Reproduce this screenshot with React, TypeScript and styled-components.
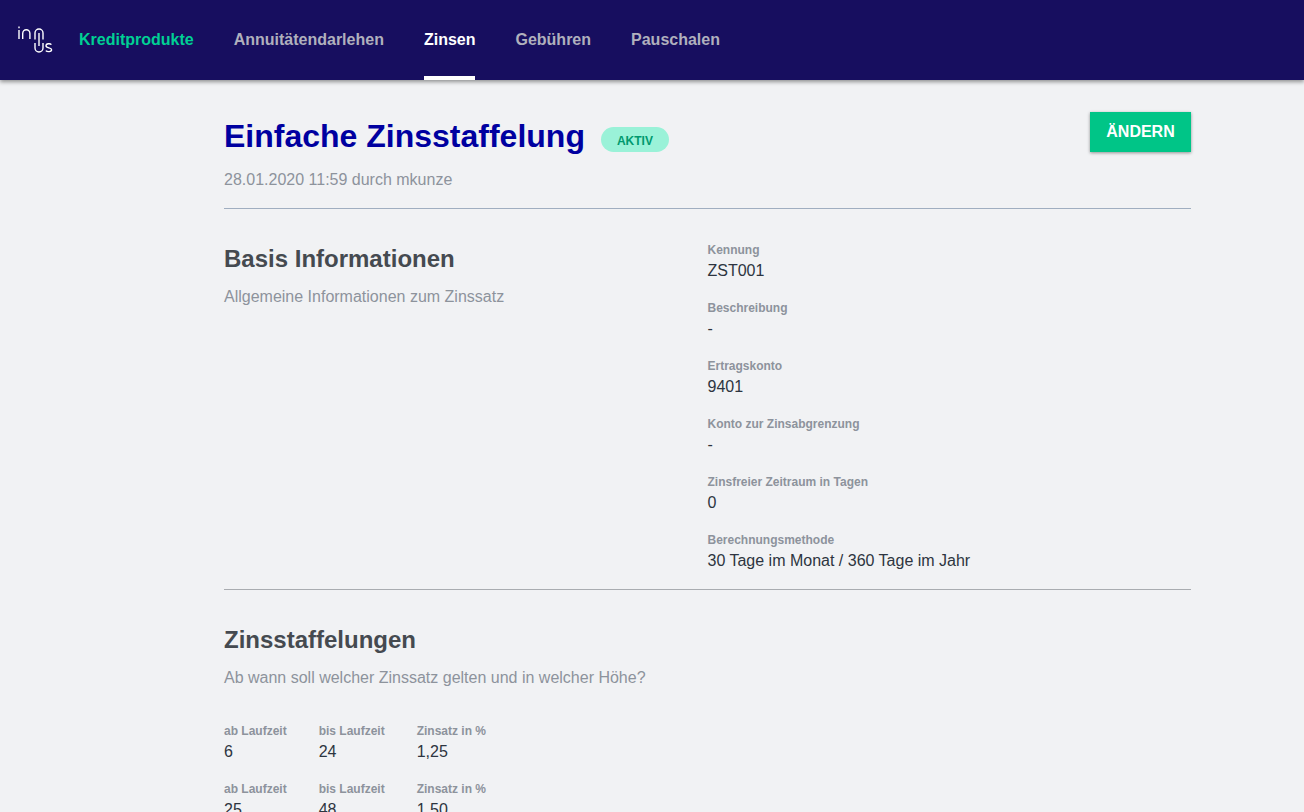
import styled, { createGlobalStyle } from "styled-components";

const GlobalStyle = createGlobalStyle`
  html, body {
    margin: 0;
    height: 100%;
    overflow: hidden;
    background: #f1f2f4;
    font-family: "Liberation Sans", Arial, sans-serif;
  }
`;

const Header = styled.header`
  display: flex;
  align-items: stretch;
  height: 80px;
  background: #170e5f;
  box-shadow: 0 2px 4px rgba(0, 0, 0, 0.4);
  position: relative;
`;

const LogoBox = styled.div`
  display: flex;
  align-items: flex-start;
  width: 79px;
  padding: 25px 0 0 17px;
  box-sizing: border-box;
`;

const Nav = styled.nav`
  display: flex;
  gap: 40px;
`;

const NavItem = styled.a<{ $active?: boolean; $brand?: boolean }>`
  display: flex;
  align-items: center;
  box-sizing: border-box;
  height: 80px;
  font-size: 16px;
  font-weight: 700;
  color: ${(p) => (p.$brand ? "#00d094" : p.$active ? "#ffffff" : "#b0b0bd")};
  border-bottom: 4px solid ${(p) => (p.$active ? "#ffffff" : "transparent")};
  padding-top: 4px;
`;

const Main = styled.main`
  width: 967px;
  margin-left: 224px;
`;

const TitleRow = styled.div`
  display: flex;
  justify-content: space-between;
  align-items: flex-start;
  padding-top: 32px;
`;

const TitleLine = styled.div`
  display: flex;
  align-items: center;
  gap: 16px;
  height: 48px;
`;

const Title = styled.h1`
  margin: 0;
  font-size: 32px;
  line-height: 48px;
  font-weight: 700;
  color: #0000a0;
`;

const Badge = styled.span`
  display: flex;
  align-items: center;
  justify-content: center;
  width: 68px;
  height: 25px;
  margin-top: 6px;
  padding-top: 3px;
  box-sizing: border-box;
  border-radius: 13px;
  background: #9af2d8;
  color: #00996e;
  font-size: 12px;
  font-weight: 700;
`;

const ChangeButton = styled.button`
  width: 101px;
  height: 40px;
  border: 0;
  background: #00c587;
  color: #ffffff;
  font-family: inherit;
  font-size: 16px;
  font-weight: 700;
  box-shadow: 0 1px 3px rgba(0, 0, 0, 0.4);
`;

const Meta = styled.div`
  margin: 8px 0 16px;
  font-size: 16px;
  line-height: 24px;
  color: #8d939c;
`;

const Divider = styled.hr<{ $soft?: boolean }>`
  margin: 0;
  border: 0;
  height: 1px;
  background: ${(p) => (p.$soft ? "#a9acb0" : "#a0aec0")};
`;

const Section = styled.section`
  display: grid;
  grid-template-columns: 1fr 1fr;
`;

const SectionText = styled.div`
  padding-top: 32px;
`;

const SectionTitle = styled.h2`
  margin: 0;
  font-size: 24px;
  line-height: 36px;
  font-weight: 700;
  color: #454a50;
`;

const SectionHint = styled.p`
  margin: 8px 0 0;
  font-size: 16px;
  line-height: 24px;
  color: #8d939c;
`;

const Fields = styled.div`
  display: flex;
  flex-direction: column;
  gap: 16px;
  padding: 32px 0 16px;
`;

const Field = styled.div`
  display: flex;
  flex-direction: column;
`;

const Label = styled.span`
  font-size: 12px;
  line-height: 18px;
  font-weight: 700;
  color: #8d939c;
`;

const Value = styled.span`
  font-size: 16px;
  line-height: 24px;
  color: #2d3540;
`;

const Rates = styled.div`
  display: flex;
  flex-direction: column;
  gap: 16px;
  margin-top: 32px;
`;

const RateRow = styled.div`
  display: flex;
  gap: 32px;
`;

const fieldRows = [
  ["Kennung", "ZST001"],
  ["Beschreibung", "-"],
  ["Ertragskonto", "9401"],
  ["Konto zur Zinsabgrenzung", "-"],
  ["Zinsfreier Zeitraum in Tagen", "0"],
  ["Berechnungsmethode", "30 Tage im Monat / 360 Tage im Jahr"],
];

const rates = [
  ["6", "24", "1,25"],
  ["25", "48", "1,50"],
];

function Logo() {
  return (
    <svg width="36" height="28" viewBox="17 25 36 28" fill="none" stroke="#fff" strokeWidth="1.4">
      <path d="M19 30v9M19 26.6v1.6" />
      <path d="M22.7 39v-5.6a3.6 3.6 0 0 1 7.2 0V39" />
      <path d="M35 39.5v-6.5a4 4 0 0 1 8 0v6.5" />
      <path d="M39 33v13" />
      <path d="M35 43v5a4 4 0 0 0 8 0v-5" />
      <path d="M51.4 44.6c-1-1.2-5.4-1.4-5.4 1.2 0 2.7 5.6 1.5 5.6 4 0 2.4-4.6 2.2-5.8.8" />
    </svg>
  );
}

export default function App() {
  return (
    <>
      <GlobalStyle />
      <Header>
        <LogoBox>
          <Logo />
        </LogoBox>
        <Nav>
          <NavItem $brand>Kreditprodukte</NavItem>
          <NavItem>Annuitätendarlehen</NavItem>
          <NavItem $active>Zinsen</NavItem>
          <NavItem>Gebühren</NavItem>
          <NavItem>Pauschalen</NavItem>
        </Nav>
      </Header>
      <Main>
        <TitleRow>
          <TitleLine>
            <Title>Einfache Zinsstaffelung</Title>
            <Badge>AKTIV</Badge>
          </TitleLine>
          <ChangeButton>ÄNDERN</ChangeButton>
        </TitleRow>
        <Meta>28.01.2020 11:59 durch mkunze</Meta>
        <Divider />
        <Section>
          <SectionText>
            <SectionTitle>Basis Informationen</SectionTitle>
            <SectionHint>Allgemeine Informationen zum Zinssatz</SectionHint>
          </SectionText>
          <Fields>
            {fieldRows.map(([label, value]) => (
              <Field key={label}>
                <Label>{label}</Label>
                <Value>{value}</Value>
              </Field>
            ))}
          </Fields>
        </Section>
        <Divider $soft />
        <SectionText>
          <SectionTitle>Zinsstaffelungen</SectionTitle>
          <SectionHint>Ab wann soll welcher Zinssatz gelten und in welcher Höhe?</SectionHint>
        </SectionText>
        <Rates>
          {rates.map((r) => (
            <RateRow key={r[0]}>
              <Field>
                <Label>ab Laufzeit</Label>
                <Value>{r[0]}</Value>
              </Field>
              <Field>
                <Label>bis Laufzeit</Label>
                <Value>{r[1]}</Value>
              </Field>
              <Field>
                <Label>Zinsatz in %</Label>
                <Value>{r[2]}</Value>
              </Field>
            </RateRow>
          ))}
        </Rates>
      </Main>
    </>
  );
}
